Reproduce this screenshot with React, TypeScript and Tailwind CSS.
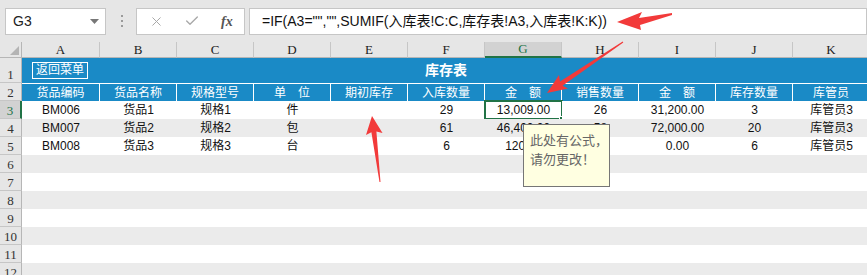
import { X, Check } from "lucide-react";

const cols = ["A", "B", "C", "D", "E", "F", "G", "H", "I", "J", "K"];

const headers = [
  "货品编码",
  "货品名称",
  "规格型号",
  "单　位",
  "期初库存",
  "入库数量",
  "金　额",
  "销售数量",
  "金　额",
  "库存数量",
  "库管员",
];

const rows = [
  ["BM006", "货品1", "规格1", "件", "", "29", "13,009.00", "26", "31,200.00", "3", "库管员3"],
  ["BM007", "货品2", "规格2", "包", "", "61", "46,400.00", "58", "72,000.00", "20", "库管员3"],
  ["BM008", "货品3", "规格3", "台", "", "6", "120.00", "0", "0.00", "6", "库管员5"],
];

const emptyRows = [6, 7, 8, 9, 10, 11, 12];

const font = { fontFamily: '"Liberation Sans", "Noto Sans CJK SC", sans-serif' };
const serif = { fontFamily: '"Liberation Serif", "Noto Sans CJK SC", serif' };

function FormulaBar() {
  return (
    <div className="flex items-center h-[42px] bg-[#e6e6e6] pl-[5px]" style={font}>
      <div className="flex items-center justify-between w-[101px] h-[27px] bg-white border border-[#c6c6c6] pl-[7px] pr-[6px]">
        <span className="text-[14px] text-[#222]">G3</span>
        <svg width="9" height="5" viewBox="0 0 9 5">
          <polygon points="0,0 9,0 4.5,5" fill="#777" />
        </svg>
      </div>
      <div className="flex flex-col gap-[3px] ml-[15px]">
        <div className="w-[2px] h-[2px] bg-[#9a9a9a]" />
        <div className="w-[2px] h-[2px] bg-[#9a9a9a]" />
        <div className="w-[2px] h-[2px] bg-[#9a9a9a]" />
      </div>
      <div className="flex items-center w-[109px] h-[27px] ml-[13px] bg-white border border-[#c6c6c6]">
        <X className="ml-[12px] text-[#a8a8a8]" size={15} strokeWidth={1.6} />
        <Check className="ml-[20px] text-[#a8a8a8]" size={16} strokeWidth={2} />
        <span className="ml-[21px] text-[14px] italic font-bold text-[#555]" style={serif}>
          fx
        </span>
      </div>
      <div className="flex items-center flex-1 h-[27px] ml-[4px] bg-white border border-[#c6c6c6] pl-[12px]">
        <span className="text-[14px] text-[#111] whitespace-nowrap">
          =IF(A3="","",SUMIF(入库表!C:C,库存表!A3,入库表!K:K))
        </span>
      </div>
    </div>
  );
}

function RowHead({ n, tall, active }: { n: number; tall?: boolean; active?: boolean }) {
  return (
    <div
      className={
        "flex items-end justify-center border-b border-[#c6c6c6] text-[13px] leading-none pb-[1px] " +
        (active
          ? "bg-[#d2d2d2] text-[#217346] border-r-2 border-r-[#217346]"
          : "bg-[#e6e6e6] text-[#333] border-r border-r-[#b6b6b6]") +
        (tall ? " h-[25px]" : " h-[18px]")
      }
      style={serif}
    >
      {n}
    </div>
  );
}

export default function App() {
  return (
    <div className="relative w-[867px] h-[275px] overflow-hidden bg-white" style={font}>
      <FormulaBar />

      <div className="grid grid-cols-[22px_78px_repeat(10,77px)]">
        {/* column letters */}
        <div className="relative h-[16px] bg-[#e6e6e6] border-r border-b border-[#b6b6b6]">
          <svg className="absolute right-[2px] bottom-[2px]" width="9" height="9" viewBox="0 0 9 9">
            <polygon points="9,0 9,9 0,9" fill="#b4b4b4" />
          </svg>
        </div>
        {cols.map((c) => (
          <div
            key={c}
            className={
              "flex items-center justify-center h-[16px] text-[13px] border-r border-[#c6c6c6] " +
              (c === "G"
                ? "bg-[#d2d2d2] text-[#217346] border-b-2 border-b-[#217346]"
                : "bg-[#e6e6e6] text-[#222] border-b border-b-[#b6b6b6]")
            }
            style={serif}
          >
            {c}
          </div>
        ))}

        {/* row 1 */}
        <RowHead n={1} tall />
        <div className="col-span-11 grid grid-cols-[1fr_auto_1fr] items-center h-[25px] bg-[#1a8ac6]">
          <div className="justify-self-start ml-[10px] h-[17px] px-[3px] border border-white text-white text-[12px] leading-[15px]">
            返回菜单
          </div>
          <div className="text-white text-[14px] font-bold">库存表</div>
          <div />
        </div>

        {/* row 2 */}
        <RowHead n={2} />
        {headers.map((h, i) => (
          <div
            key={i}
            className="flex items-center justify-center h-[18px] bg-[#1a8ac6] border-t border-r border-white text-white text-[12px] whitespace-nowrap"
          >
            {h}
          </div>
        ))}

        {/* data rows */}
        {rows.map((r, ri) => (
          <div key={ri} className="contents">
            <RowHead n={ri + 3} active={ri === 0} />
            {r.map((v, ci) => (
              <div
                key={ci}
                className={
                  "relative flex items-center justify-center h-[18px] text-[12px] text-[#111] whitespace-nowrap " +
                  (ri % 2 === 1 ? "bg-[#ebebeb]" : "bg-white")
                }
              >
                {v}
                {ri === 0 && ci === 6 && (
                  <>
                    <div className="absolute -left-px -top-px -right-px -bottom-px border-2 border-[#217346]" />
                    <div className="absolute -right-[4px] -bottom-[4px] w-[7px] h-[7px] bg-[#217346] border border-white" />
                  </>
                )}
              </div>
            ))}
          </div>
        ))}

        {emptyRows.map((n) => (
          <div key={n} className="contents">
            <RowHead n={n} />
            <div className={"col-span-11 h-[18px] " + (n % 2 === 0 ? "bg-[#ebebeb]" : "bg-white")} />
          </div>
        ))}
      </div>

      {/* comment box */}
      <div className="absolute left-[523px] top-[124px] w-[87px] h-[63px] bg-[#ffffe1] border border-[#767676] pl-[6px] pt-[6px] text-[13px] leading-[19px] text-[#666]">
        <div>此处有公式，</div>
        <div>请勿更改！</div>
      </div>

      {/* red arrows */}
      <svg className="absolute left-0 top-0 pointer-events-none" width="867" height="275">
        <polygon points="617,22 642,12 639,18 672,13 672,15 640,25 641,30" fill="#f23a3a" />
        <polygon
          points="547,93 559,75 560,81.5 622.7,41.6 623.3,42.4 562.5,85.7 568,88.5"
          fill="#f23a3a"
        />
        <polygon
          points="372,116 382.5,133 376.4,131.6 380.5,182 379.5,182 371.4,132.2 366,135"
          fill="#f23a3a"
        />
      </svg>
    </div>
  );
}
